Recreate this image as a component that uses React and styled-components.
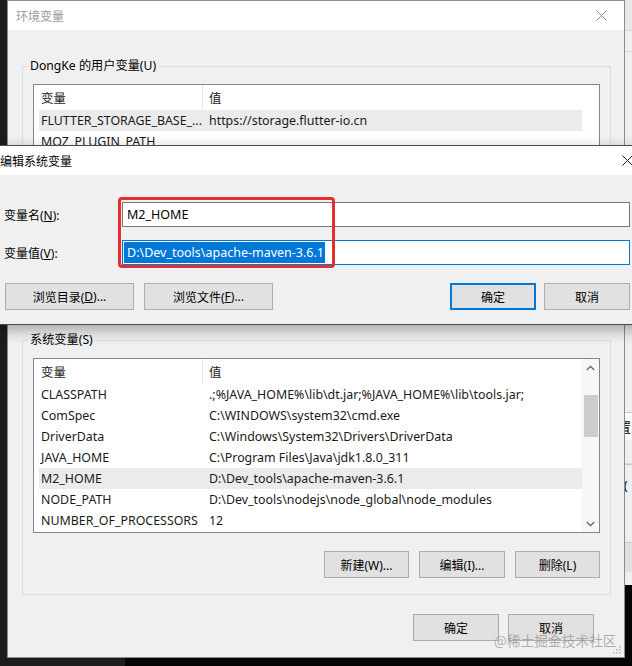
import React from 'react'
import styled, { createGlobalStyle } from 'styled-components'

const GlobalStyle = createGlobalStyle`
  html, body {
    margin: 0;
    padding: 0;
    background: #050505;
  }
  body {
    font-family: "Noto Sans", "Noto Sans CJK SC", sans-serif;
    font-size: 12px;
    color: #000;
  }
  * {
    box-sizing: border-box;
  }
`

const Desktop = styled.div`
  position: relative;
  width: 632px;
  height: 666px;
  overflow: hidden;
  background: #050505;
`

const DarkWindow = styled.div`
  position: absolute;
  left: 0;
  top: 0;
  width: 125px;
  height: 666px;
  background: #1d1d1d;
`

const SideWindow = styled.div`
  position: absolute;
  left: 624px;
  top: 0;
  width: 40px;
  height: 585px;
  background: #efefef;
  display: flex;
  flex-direction: column;
`

const SideBand = styled.div`
  height: ${p => p.$h}px;
  flex-shrink: 0;
  background: ${p => p.$bg || 'transparent'};
  border-bottom: ${p => (p.$line ? '1px solid #d9d9d9' : 'none')};
  border-top: ${p => (p.$box ? '1px solid #c8c8c8' : 'none')};
  display: flex;
  align-items: center;
  font-size: 13px;
  overflow: hidden;
  white-space: nowrap;
`

const Window = styled.div`
  position: absolute;
  left: ${p => p.$left}px;
  top: ${p => p.$top}px;
  width: ${p => p.$width}px;
  height: ${p => p.$height}px;
  background: #f0f0f0;
  border: 1px solid ${p => (p.$active ? '#4a4a4a' : '#8c8c8c')};
  box-shadow: ${p => (p.$active ? '0 5px 14px rgba(0, 0, 0, 0.32)' : 'none')};
  display: flex;
  flex-direction: column;
`

const TitleBar = styled.div`
  height: 29px;
  flex-shrink: 0;
  background: #fff;
  display: flex;
  align-items: center;
  padding-left: ${p => p.$pad}px;
  color: ${p => (p.$active ? '#000' : '#9a9a9a')};
  font-size: 12px;
`

const TitleText = styled.span`
  flex: 1;
  font-family: "Noto Sans CJK SC", sans-serif;
`

const CloseBox = styled.div`
  width: ${p => p.$w}px;
  height: 29px;
  display: flex;
  align-items: center;
  justify-content: center;
`

const Body = styled.div`
  flex: 1;
  display: flex;
  flex-direction: column;
  padding: ${p => p.$pad};
`

const Group = styled.fieldset`
  margin: ${p => p.$margin};
  padding: 0;
  height: ${p => p.$height}px;
  border: 1px solid #dcdcdc;
  min-width: 0;
`

const Legend = styled.legend`
  margin-left: 5px;
  padding: 0 3px 0 2px;
  line-height: 16px;
  font-size: 12.2px;
  font-family: "Noto Sans", "Noto Sans CJK SC", sans-serif;
`

const GroupInner = styled.div`
  padding: 10px 10px 0 10px;
  display: flex;
  flex-direction: column;
`

const ListBox = styled.div`
  height: 175px;
  border: 1px solid #828790;
  background: #fff;
  display: flex;
  flex-shrink: 0;
`

const ListMain = styled.div`
  flex: 1;
  padding-left: 5px;
  display: flex;
  flex-direction: column;
  overflow: hidden;
`

const Row = styled.div`
  display: grid;
  grid-template-columns: 164px 1fr;
  height: ${p => (p.$head ? 25 : 21)}px;
  align-items: center;
  background: ${p => (p.$selected ? '#ebebeb' : 'transparent')};
  color: #1a1a1a;
  font-size: 12.4px;
  white-space: nowrap;
  flex-shrink: 0;
`

const Cell = styled.div`
  padding-left: ${p => (p.$second ? 6 : 2)}px;
  height: 100%;
  display: flex;
  align-items: center;
  overflow: hidden;
  border-right: ${p => (p.$divider ? '1px solid #e5e5e5' : 'none')};
`

const ScrollBar = styled.div`
  width: 17px;
  background: ${p => (p.$blank ? '#fff' : '#f7f7f7')};
  display: flex;
  flex-direction: column;
  align-items: center;
`

const ScrollArrow = styled.div`
  height: 17px;
  width: 17px;
  display: flex;
  align-items: center;
  justify-content: center;
`

const ScrollTrack = styled.div`
  flex: 1;
  width: 100%;
  display: flex;
  flex-direction: column;
  align-items: center;
  padding-top: 19px;
`

const Thumb = styled.div`
  width: 14px;
  height: 42px;
  background: #cdcdcd;
`

const ButtonRow = styled.div`
  display: flex;
  justify-content: ${p => p.$align || 'flex-end'};
  gap: ${p => p.$gap}px;
  margin-top: ${p => p.$top}px;
  padding-right: ${p => p.$right || 0}px;
  flex-shrink: 0;
`

const Button = styled.div`
  width: ${p => p.$w}px;
  height: 27px;
  background: #e1e1e1;
  border: ${p => (p.$focus ? '2px solid #0078d7' : '1px solid #adadad')};
  display: flex;
  align-items: center;
  justify-content: center;
  font-size: 12px;
  font-family: "Noto Sans", "Noto Sans CJK SC", sans-serif;
  white-space: nowrap;
  color: #000;
`

const Spacer = styled.div`
  flex: 1;
`

const FieldRow = styled.div`
  display: flex;
  align-items: center;
  height: 25px;
  margin-top: ${p => p.$top}px;
  flex-shrink: 0;
`

const FieldLabel = styled.div`
  width: 118px;
  font-size: 12px;
  white-space: nowrap;
  margin-left: -1px;
  padding-top: 1px;
`

const Field = styled.div`
  flex: 1;
  height: 25px;
  background: #fff;
  border: 1px solid ${p => (p.$focus ? '#0078d7' : '#7a7a7a')};
  display: flex;
  align-items: center;
  padding-left: ${p => (p.$focus ? 1 : 4)}px;
  font-size: 12.5px;
  white-space: nowrap;
`

const Selection = styled.span`
  background: #0078d7;
  color: #fff;
  line-height: 21px;
  padding: 0 1px 0 3px;
`

const Highlight = styled.div`
  position: absolute;
  left: 121px;
  top: 51px;
  width: 217px;
  height: 71px;
  border: 3px solid #e62e2e;
  border-radius: 4px;
  pointer-events: none;
`

const Watermark = styled.div`
  position: absolute;
  left: 494px;
  top: 630px;
  font-family: "Noto Sans CJK SC", sans-serif;
  font-size: 13.5px;
  color: rgba(150, 150, 150, 0.75);
  letter-spacing: 0.2px;
  white-space: nowrap;
`

const Grip = styled.svg`
  position: absolute;
  right: 3px;
  bottom: 3px;
`

const CloseIcon = ({ color }) => (
  <svg width="11" height="11" viewBox="0 0 11 11">
    <path d="M0.5 0.5 L10.5 10.5 M10.5 0.5 L0.5 10.5" stroke={color} strokeWidth="1" fill="none" />
  </svg>
)

const Chevron = ({ up }) => (
  <svg width="9" height="6" viewBox="0 0 9 6">
    <path
      d={up ? 'M0.8 5 L4.5 1.3 L8.2 5' : 'M0.8 1 L4.5 4.7 L8.2 1'}
      stroke="#606060"
      strokeWidth="1.2"
      fill="none"
    />
  </svg>
)

const userVars = [
  ['FLUTTER_STORAGE_BASE_...', 'https://storage.flutter-io.cn', true],
  ['MOZ_PLUGIN_PATH', ''],
  ['OneDrive', ''],
  ['Path', ''],
]

const sysVars = [
  ['CLASSPATH', '.;%JAVA_HOME%\\lib\\dt.jar;%JAVA_HOME%\\lib\\tools.jar;'],
  ['ComSpec', 'C:\\WINDOWS\\system32\\cmd.exe'],
  ['DriverData', 'C:\\Windows\\System32\\Drivers\\DriverData'],
  ['JAVA_HOME', 'C:\\Program Files\\Java\\jdk1.8.0_311'],
  ['M2_HOME', 'D:\\Dev_tools\\apache-maven-3.6.1', true],
  ['NODE_PATH', 'D:\\Dev_tools\\nodejs\\node_global\\node_modules'],
  ['NUMBER_OF_PROCESSORS', '12'],
]

function VarList({ rows, scroll }) {
  return (
    <ListBox>
      <ListMain>
        <Row $head>
          <Cell $divider>变量</Cell>
          <Cell $second>值</Cell>
        </Row>
        {rows.map(([name, value, selected]) => (
          <Row key={name} $selected={selected}>
            <Cell>{name}</Cell>
            <Cell $second>{value}</Cell>
          </Row>
        ))}
      </ListMain>
      {scroll ? (
        <ScrollBar>
          <ScrollArrow>
            <Chevron up />
          </ScrollArrow>
          <ScrollTrack>
            <Thumb />
          </ScrollTrack>
          <ScrollArrow>
            <Chevron />
          </ScrollArrow>
        </ScrollBar>
      ) : (
        <ScrollBar $blank />
      )}
    </ListBox>
  )
}

export default function App() {
  return (
    <Desktop>
      <GlobalStyle />
      <DarkWindow />

      <SideWindow>
        <SideBand $h={31} $bg="#e8e8e8" $line />
        <SideBand $h={21} $line />
        <SideBand $h={360} />
        <SideBand $h={28} $bg="#fafafa" $box>
          <span style={{ marginLeft: -6 }}>置</span>
        </SideBand>
        <SideBand $h={24} $line />
        <SideBand $h={40} $box>
          <span style={{ marginLeft: -5 }}>t(</span>
        </SideBand>
        <SideBand $h={38} />
        <SideBand $h={30} $bg="#e1e1e1" $box />
      </SideWindow>

      <Window $left={7} $top={0} $width={618} $height={658}>
        <TitleBar $pad={8}>
          <TitleText>环境变量</TitleText>
          <CloseBox $w={46}>
            <CloseIcon color="#8a8a8a" />
          </CloseBox>
        </TitleBar>
        <Body $pad="0 13px 0 14px">
          <Group $margin="28px 0 0 0" $height={240}>
            <Legend>DongKe 的用户变量(U)</Legend>
            <GroupInner>
              <VarList rows={userVars} />
            </GroupInner>
          </Group>
          <Group $margin="34px 0 0 0" $height={263}>
            <Legend>系统变量(S)</Legend>
            <GroupInner>
              <VarList rows={sysVars} scroll />
              <ButtonRow $gap={10} $top={18}>
                <Button $w={85}>新建(W)...</Button>
                <Button $w={86}>编辑(I)...</Button>
                <Button $w={85}>删除(L)</Button>
              </ButtonRow>
            </GroupInner>
          </Group>
          <ButtonRow $gap={9} $top={19} $right={17}>
            <Button $w={86}>确定</Button>
            <Button $w={86}>取消</Button>
          </ButtonRow>
        </Body>
        <Grip width="10" height="10" viewBox="0 0 10 10">
          {[
            [8, 2],
            [8, 5],
            [5, 5],
            [8, 8],
            [5, 8],
            [2, 8],
          ].map(([x, y]) => (
            <rect key={`${x}-${y}`} x={x} y={y} width="1.5" height="1.5" fill="#b5b5b5" />
          ))}
        </Grip>
      </Window>

      <Window $left={-4} $top={145} $width={650} $height={180} $active>
        <TitleBar $pad={3} $active>
          <TitleText>编辑系统变量</TitleText>
          <CloseBox $w={36}>
            <CloseIcon color="#222" />
          </CloseBox>
        </TitleBar>
        <Body $pad="27px 15px 13px 8px">
          <FieldRow $top={0}>
            <FieldLabel>
              变量名(<u>N</u>):
            </FieldLabel>
            <Field>M2_HOME</Field>
          </FieldRow>
          <FieldRow $top={13}>
            <FieldLabel>
              变量值(<u>V</u>):
            </FieldLabel>
            <Field $focus>
              <Selection>D:\Dev_tools\apache-maven-3.6.1</Selection>
            </Field>
          </FieldRow>
          <ButtonRow $gap={10} $top={18} $align="flex-start">
            <Button $w={129}>
              浏览目录(<u>D</u>)...
            </Button>
            <Button $w={129}>
              浏览文件(<u>F</u>)...
            </Button>
            <Spacer />
            <Button $w={86} $focus>
              确定
            </Button>
            <Button $w={86} style={{ marginLeft: -2 }}>
              取消
            </Button>
          </ButtonRow>
        </Body>
        <Highlight />
      </Window>

      <Watermark>@稀土掘金技术社区</Watermark>
    </Desktop>
  )
}
